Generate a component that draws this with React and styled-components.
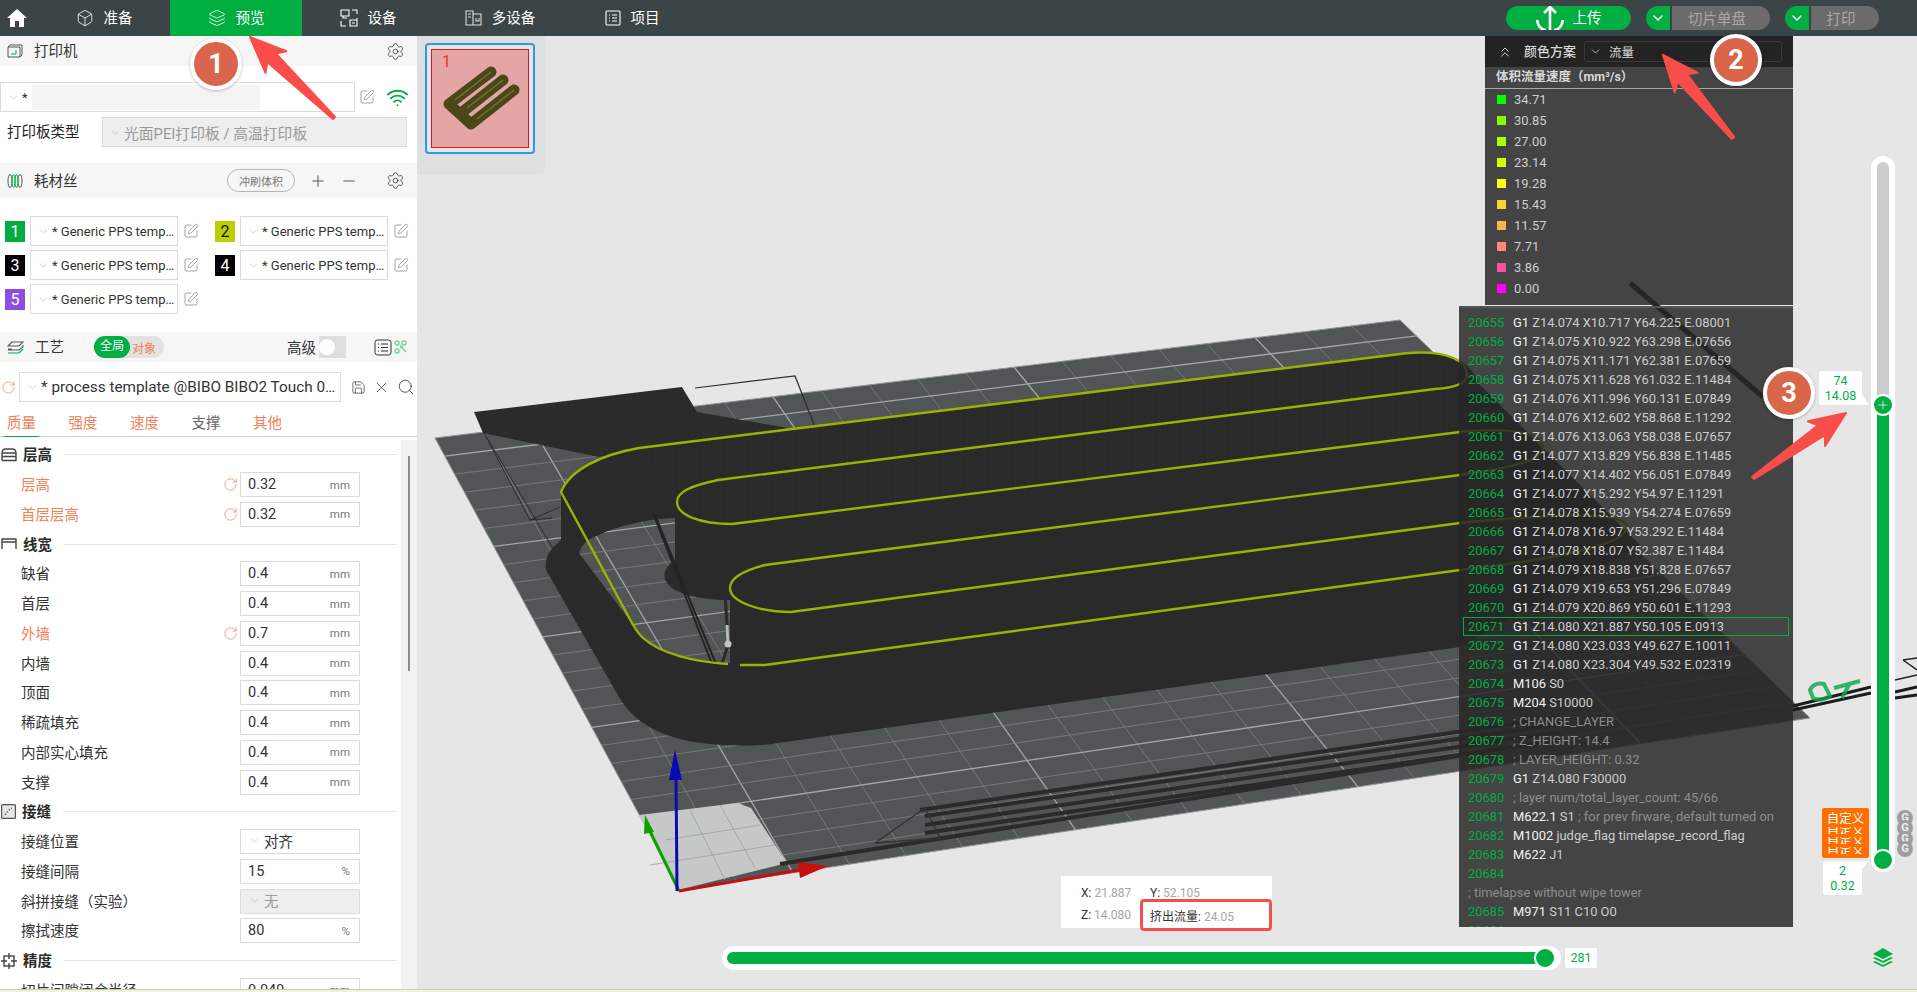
import React from 'react'
import styled, { createGlobalStyle } from 'styled-components'
import { Box, Layers, Settings, Wifi, SquarePen, Plus, Minus, Save, X, Search, RotateCw, ChevronDown, ChevronsUp } from 'lucide-react'

const font = `Roboto, "Noto Sans CJK SC", sans-serif`
const green = '#00ae42'
const orange = '#f4805a'

const GlobalStyle = createGlobalStyle`
  html, body { margin: 0; padding: 0; height: 100%; overflow: hidden; background: #e6e6e6; }
  * { box-sizing: border-box; }
  #root { height: 100%; }
`

const Page = styled.div`
  position: relative;
  width: 1917px;
  height: 992px;
  overflow: hidden;
  font-family: ${font};
  color: #262e30;
  display: flex;
  flex-direction: column;
`
const TopBar = styled.header`
  height: 36px;
  flex: none;
  background: #3b4446;
  display: flex;
  align-items: center;
`
const HomeButton = styled.div`
  width: 38px;
  height: 36px;
  display: flex;
  padding-left: 7px;
  align-items: center;
`
const NavTab = styled.div`
  width: 132px;
  height: 36px;
  display: flex;
  align-items: center;
  justify-content: center;
  gap: 10px;
  font-size: 14.5px;
  color: #fff;
  background: ${p => (p.$active ? green : 'transparent')};
`
const NavText = styled.span`
  margin-top: -3px;
`
const TopActions = styled.div`
  margin-left: auto;
  padding-right: 38px;
  display: flex;
  gap: 15px;
`
const UploadButton = styled.div`
  width: 125px;
  height: 24px;
  background: ${green};
  border-radius: 12px;
  color: #fff;
  font-size: 14.5px;
  display: flex;
  align-items: center;
  justify-content: center;
  gap: 7px;
  padding-right: 2px;
  overflow: hidden;
`
const SplitButton = styled.div`
  display: flex;
  gap: 2px;
  height: 24px;
`
const SplitChevron = styled.div`
  width: 24px;
  background: ${green};
  border-radius: 12px 0 0 12px;
  color: #fff;
  display: flex;
  align-items: center;
  justify-content: center;
`
const SplitLabel = styled.div`
  width: ${p => p.$w}px;
  background: #6b6b6b;
  border-radius: 0 12px 12px 0;
  color: #a8a8a8;
  font-size: 14.5px;
  display: flex;
  align-items: center;
  justify-content: center;
  padding: 0 8px 2px 0;
`
const Main = styled.div`
  flex: 1;
  display: flex;
  min-height: 0;
`
const Sidebar = styled.aside`
  width: 417px;
  flex: none;
  background: #fff;
  overflow: hidden;
  display: flex;
  flex-direction: column;
`
const SectionHeader = styled.div`
  height: ${p => p.$h || 30}px;
  flex: none;
  margin-top: ${p => p.$mt || 0}px;
  background: #f6f6f6;
  display: flex;
  align-items: center;
  padding: 0 ${p => p.$pr || 12}px 0 7px;
  font-size: 14.5px;
`
const HeaderTitle = styled.span`
  margin: -3px 0 0 11px;
  color: #333;
`
const HeaderRight = styled.div`
  margin-left: auto;
  display: flex;
  align-items: center;
`
const Pill = styled.div`
  width: 68px;
  height: 23px;
  border: 1px solid #b5b5b5;
  border-radius: 12px;
  font-size: 11px;
  color: #777;
  display: flex;
  align-items: center;
  justify-content: center;
  margin-right: 14px;
`
const PrinterRow = styled.div`
  display: flex;
  align-items: center;
  margin-top: 16px;
  height: 30px;
  gap: 4px;
`
const PlateRow = styled.div`
  display: flex;
  align-items: center;
  margin-top: 5px;
  height: 30px;
  padding-left: 7px;
  font-size: 14.5px;
`
const PlateLabel = styled.span`
  width: 95px;
  margin-top: -3px;
  color: #222;
`
const Select = styled.div`
  width: ${p => p.$w}px;
  height: ${p => p.$h || 30}px;
  flex: none;
  border: 1px solid #dbdbdb;
  background: ${p => (p.$disabled ? '#eeeeee' : '#fff')};
  color: ${p => (p.$disabled ? '#999' : '#333')};
  display: flex;
  align-items: center;
  padding-left: 6px;
  gap: 2px;
  font-size: ${p => p.$fs || 13}px;
  overflow: hidden;
  white-space: nowrap;
`
const SelectText = styled.span`
  min-width: 0;
`
const Redacted = styled.div`
  width: 228px;
  height: 25px;
  background: #f4f4f4;
  margin-left: 2px;
`
const FilamentGrid = styled.div`
  margin-top: 18px;
  padding-left: 5px;
  display: grid;
  grid-template-columns: 210px 210px;
  row-gap: 4px;
`
const FilamentRow = styled.div`
  display: flex;
  align-items: center;
  height: 30px;
`
const Swatch = styled.div`
  width: 20px;
  height: 21px;
  background: ${p => p.$c};
  color: ${p => p.$t || '#fff'};
  font-size: 16px;
  line-height: 21px;
  text-align: center;
  margin-right: 5px;
  flex: none;
`
const Toggle = styled.div`
  width: 70px;
  height: 22px;
  margin-left: 30px;
  border-radius: 11px;
  background: #e2e2e2;
  display: flex;
  align-items: center;
  font-size: 12px;
  color: ${orange};
`
const ToggleOn = styled.div`
  width: 36px;
  height: 22px;
  border-radius: 11px;
  background: ${green};
  color: #fff;
  text-align: center;
  line-height: 21px;
  margin-right: 2px;
`
const AdvancedLabel = styled.span`
  font-size: 14.5px;
  color: #333;
  margin-top: -2px;
`
const Switch = styled.div`
  width: 27px;
  height: 22px;
  background: #dedede;
  margin: 0 28px 0 3px;
  display: flex;
  align-items: center;
`
const SwitchKnob = styled.div`
  width: 16px;
  height: 16px;
  border-radius: 50%;
  background: #fff;
`
const PresetRow = styled.div`
  display: flex;
  align-items: center;
  margin-top: 10px;
  padding-left: 1px;
  height: 30px;
`
const PresetIcons = styled.div`
  display: flex;
  align-items: center;
  gap: 7px;
  margin-left: 10px;
`
const Tabs = styled.div`
  height: 35px;
  flex: none;
  border-bottom: 1px solid #cfcfcf;
  display: flex;
  padding: 13px 0 0 7px;
  gap: 32.5px;
  font-size: 14.5px;
`
const TabLabel = styled.div`
  color: ${p => p.$c};
  position: relative;
  height: 22px;
  line-height: 17px;
`
const TabMark = styled.div`
  position: absolute;
  left: -3px;
  right: -3px;
  bottom: 0;
  height: 1px;
  background: ${green};
`
const ParamsArea = styled.div`
  flex: 1;
  display: flex;
  min-height: 0;
  padding-top: 3px;
  overflow: hidden;
`
const ParamList = styled.div`
  width: 401px;
  flex: none;
`
const ScrollTrack = styled.div`
  width: 16px;
  flex: none;
  background: #f2f2f2;
  padding: 16px 0 0 7px;
`
const ScrollThumb = styled.div`
  width: 2px;
  height: 215px;
  background: #8a8a8a;
`
const GroupRow = styled.div`
  height: 29.75px;
  display: flex;
  align-items: center;
  padding-left: 1px;
  gap: 6px;
  font-size: 14.5px;
  font-weight: 700;
  color: #2a2a2a;
`
const GroupText = styled.span`
  margin-top: -2px;
`
const GroupLine = styled.div`
  flex: 1;
  height: 1px;
  background: #e6e6e6;
  margin: 0 4px 0 6px;
`
const ParamRow = styled.div`
  height: 29.75px;
  width: 360px;
  padding-left: 21px;
  display: grid;
  grid-template-columns: 1fr 17px 120px;
  align-items: center;
  font-size: 14.5px;
  color: ${p => (p.$changed ? orange : '#333')};
`
const ParamLabel = styled.span`
  margin-top: -2px;
`
const ResetSlot = styled.span`
  display: flex;
`
const ParamInput = styled.div`
  height: 25px;
  border: 1px solid #dbdbdb;
  background: ${p => (p.$disabled ? '#eeeeee' : '#fff')};
  color: ${p => (p.$disabled ? '#999' : '#333')};
  display: flex;
  align-items: center;
  justify-content: space-between;
  padding: 0 9px 0 7px;
  font-size: 14.5px;
`
const Unit = styled.span`
  font-size: 11.5px;
  color: #777;
`
const DropValue = styled.div`
  display: flex;
  align-items: center;
  gap: 3px;
  margin-top: -2px;
`
const Canvas = styled.main`
  flex: 1;
  position: relative;
  background: #e6e6e6;
  overflow: hidden;
`
const Scene = styled.svg`
  position: absolute;
  left: 0;
  top: 0;
  width: 1500px;
  height: 956px;
`
const ThumbPanel = styled.div`
  position: absolute;
  left: 0;
  top: 0;
  width: 128px;
  height: 138px;
  background: #dfdfdf;
  border-radius: 0 0 5px 0;
  padding: 7px 8px;
`
const ThumbCard = styled.div`
  width: 110px;
  height: 111px;
  border: 2px solid #2b98ea;
  border-radius: 4px;
  padding: 4px;
  background: #e6e6e6;
`
const ThumbInner = styled.div`
  position: relative;
  width: 100%;
  height: 100%;
  border: 1px solid #cf1c1c;
  background: #e5a5a5;
  color: #e33;
  font-size: 16px;
  line-height: 16px;
  padding: 4px 0 0 10px;
`
const ThumbShape = styled.svg`
  position: absolute;
  left: -7px;
  top: -7px;
  width: 110px;
  height: 111px;
`
const Legend = styled.section`
  position: absolute;
  left: 1068px;
  top: 0;
  width: 308px;
  height: 269px;
  background: rgba(39, 39, 39, 0.85);
  color: #cfcfcf;
`
const LegendHeader = styled.div`
  height: 31px;
  background: #232323;
  display: flex;
  align-items: center;
  padding-left: 12px;
  font-size: 13px;
  font-weight: 500;
  color: #d8d8d8;
`
const LegendHeading = styled.span`
  margin: -2px 8px 0 11px;
`
const LegendSelect = styled.div`
  width: 198px;
  height: 21px;
  border: 1px solid #3a3a3a;
  border-radius: 3px;
  display: flex;
  align-items: center;
  padding-left: 4px;
  gap: 7px;
  font-size: 12.5px;
  font-weight: 400;
`
const LegendTitle = styled.div`
  height: 22px;
  border-bottom: 1px solid #a8a8a8;
  padding-left: 11px;
  font-size: 12.5px;
  font-weight: 700;
  color: #d8d8d8;
  line-height: 19px;
`
const LegendList = styled.div`
  padding: 0 0 0 12px;
`
const LegendRow = styled.div`
  height: 21px;
  display: flex;
  align-items: center;
  gap: 8px;
  font-size: 12.9px;
`
const LegendDot = styled.div`
  width: 9px;
  height: 9px;
  background: ${p => p.$c};
`
const Gcode = styled.section`
  position: absolute;
  left: 1042px;
  top: 270px;
  width: 334px;
  height: 621px;
  background: rgba(39, 39, 39, 0.85);
  border-top: 2px solid #55555c;
  padding-top: 5px;
  overflow: hidden;
  font-size: 12.9px;
  white-space: nowrap;
`
const GcodeRow = styled.div`
  height: 19px;
  margin: 0 4px;
  padding-left: 4px;
  display: flex;
  align-items: center;
  border: ${p => (p.$active ? `1px solid ${green}` : '1px solid transparent')};
`
const LineNo = styled.span`
  width: 45px;
  flex: none;
  color: ${green};
`
const GcodeLine = styled.span`
  white-space: pre;
`
const Cmd = styled.span`
  color: #f2f2f2;
`
const Args = styled.span`
  color: #cccccc;
`
const Comment = styled.span`
  color: #8e8e8e;
`
const VSlider = styled.div`
  position: absolute;
  left: 1454px;
  top: 120px;
  width: 24px;
  height: 716px;
  background: #fff;
  border-radius: 12px;
  padding: 6px;
  display: flex;
  flex-direction: column;
`
const RailGrey = styled.div`
  flex: 1;
  background: #cccccc;
  border-radius: 6px 6px 0 0;
`
const RailGreen = styled.div`
  height: 460px;
  background: ${green};
`
const Handle = styled.div`
  position: absolute;
  left: ${p => p.$x}px;
  top: ${p => p.$y}px;
  width: 22px;
  height: 22px;
  border-radius: 50%;
  background: ${green};
  border: 2px solid #fff;
  display: flex;
  align-items: center;
  justify-content: center;
  color: #fff;
`
const SliderTip = styled.div`
  position: absolute;
  left: ${p => p.$x}px;
  top: ${p => p.$y}px;
  width: ${p => p.$w}px;
  height: 34px;
  background: #fff;
  color: ${green};
  font-size: 12.5px;
  line-height: 15px;
  text-align: center;
  padding-top: 2px;
  border-radius: 2px;
`
const TipTail = styled.svg`
  position: absolute;
  left: ${p => p.$x}px;
  top: ${p => p.$y}px;
`
const CustomTag = styled.div`
  position: absolute;
  left: 1405px;
  top: 772px;
  width: 47px;
  height: 50px;
  background: #ff6f00;
  border-radius: 2px;
  color: #fff;
  font-size: 12.5px;
  text-align: center;
  overflow: hidden;
  padding-top: 3px;
`
const CustomFirst = styled.div`
  height: 15px;
  line-height: 15px;
  margin-bottom: 1px;
`
const CustomClip = styled.div`
  height: 7px;
  line-height: 7px;
  margin-bottom: 3px;
  overflow: hidden;
`
const GMarks = styled.div`
  position: absolute;
  left: 1480px;
  top: 774px;
  display: flex;
  flex-direction: column;
`
const GMark = styled.div`
  width: 16px;
  height: 16px;
  margin-bottom: -5.6px;
  border-radius: 50%;
  background: #9e9e9e;
  color: #eee;
  font-size: 11px;
  font-weight: 700;
  line-height: 16px;
  text-align: center;
`
const HSlider = styled.div`
  position: absolute;
  left: 305px;
  top: 910px;
  width: 839px;
  height: 24px;
  background: #fff;
  border-radius: 12px;
  padding: 6px 5px;
`
const RailH = styled.div`
  width: 816px;
  height: 12px;
  border-radius: 6px 0 0 6px;
  background: ${green};
`
const HValue = styled.div`
  position: absolute;
  left: 1148px;
  top: 912px;
  width: 32px;
  height: 20px;
  background: #fff;
  border-radius: 2px;
  color: ${green};
  font-size: 12.5px;
  line-height: 20px;
  text-align: center;
`
const StackButton = styled.svg`
  position: absolute;
  left: 1456px;
  top: 911px;
`
const InfoBox = styled.div`
  position: absolute;
  left: 644px;
  top: 840px;
  width: 211px;
  height: 52px;
  background: #fff;
  display: grid;
  grid-template-columns: 69px 1fr;
  grid-template-rows: 25px 20px;
  padding: 4px 0 0 20px;
  font-size: 12px;
  color: #333;
  align-items: center;
`
const InfoVal = styled.span`
  color: #a6a6a6;
`
const RedFrame = styled.div`
  position: absolute;
  left: 723px;
  top: 863px;
  width: 132px;
  height: 32px;
  border: 3px solid #f44e4e;
  border-radius: 4px;
`
const StatusStrip = styled.div`
  position: absolute;
  left: 0;
  bottom: 0;
  width: 100%;
  height: 3px;
  background: #eef5d8;
  border-top: 1px solid #c9cfc0;
`
const ArrowLayer = styled.svg`
  position: absolute;
  left: 0;
  top: 0;
  width: 1917px;
  height: 992px;
  pointer-events: none;
`
const CallOut = styled.div`
  position: absolute;
  left: ${p => p.$x - 26}px;
  top: ${p => p.$y - 26}px;
  width: 52px;
  height: 52px;
  border-radius: 50%;
  background: #d9654a;
  border: 4px solid #fff;
  box-shadow: 0 1px 3px rgba(0, 0, 0, 0.25);
  color: #fff;
  font-size: 27px;
  font-weight: 700;
  line-height: 44px;
  text-align: center;
`

const Edit = p => <SquarePen size={16} strokeWidth={1} color="#777" {...p} />
const Gear = () => <Settings size={19} strokeWidth={1.1} color="#444" />
const Chev = ({ c = '#aaa' }) => <ChevronDown size={13} strokeWidth={1} color={c} style={{ flex: 'none' }} />
const Reset = () => <RotateCw size={15} strokeWidth={1.2} color={orange} />

const PLATE = [[435, 438], [1400, 320], [1810, 718], [680, 890]]
const lerp = (a, b, t) => [a[0] + (b[0] - a[0]) * t, a[1] + (b[1] - a[1]) * t]

// plate grid, plain bilinear, the perspective is small enough
function gridLines() {
  const out = []
  const [tl, tr, br, bl] = PLATE
  for (let i = 1; i < 20; i++) {
    const a = lerp(tl, tr, i / 20)
    const b = lerp(bl, br, i / 20)
    out.push(<line key={'u' + i} x1={a[0]} y1={a[1]} x2={b[0]} y2={b[1]} stroke={i % 5 === 2 ? '#a3a6a6' : '#7d8282'} strokeWidth={i % 5 === 2 ? 1.3 : 0.8} />)
  }
  for (let i = 1; i < 25; i++) {
    const a = lerp(tl, bl, i / 25)
    const b = lerp(tr, br, i / 25)
    out.push(<line key={'v' + i} x1={a[0]} y1={a[1]} x2={b[0]} y2={b[1]} stroke={i % 5 === 1 ? '#a3a6a6' : '#7d8282'} strokeWidth={i % 5 === 1 ? 1.3 : 0.8} />)
  }
  return out
}

const SILHOUETTE = 'M561 492 C570 470 600 455 639 448 L1408 353 C1450 350 1470 360 1480 385 L1640 545 L1460 647 L778 743 C760 746 745 746 732 745 C690 745 640 735 619 697 L546 570 C544 555 552 548 561 540 Z'
const GAP = 'M579 553 C582 545 586 541 592 538 C620 524 650 519 675 518 L675 560 C660 570 662 582 675 590 C692 598 712 600 730 600 L730 663 C710 662 697 660 685 657 C665 651 652 646 642 637 Z'
const YELLOW = [
  'M1435 389 C1450 388 1467 385 1467 375 C1467 362 1450 350 1408 353 L639 448 C600 455 570 470 561 492 L632 623 C636 630 638 633 642 637 C660 654 695 662 728 664',
  'M740 665 L765 665 L1460 570 C1550 560 1627 545 1627 527 C1627 510 1540 515 1460 523 L791 612 C760 612 730 602 730 588 C730 578 742 571 765 565 L1460 475 C1520 467 1545 458 1543 447 C1540 430 1500 428 1460 432 L732 524 C700 524 677 515 677 502 C677 492 690 486 718 480 L1435 389',
]

function ArrowShape({ from, to }) {
  const dx = to[0] - from[0]
  const dy = to[1] - from[1]
  const len = Math.hypot(dx, dy)
  const d = [dx / len, dy / len]
  const n = [-d[1], d[0]]
  const at = (along, side) => `${from[0] + d[0] * along + n[0] * side},${from[1] + d[1] * along + n[1] * side}`
  const pts = [at(0, -1.5), at(len - 30, -6), at(len - 36, -15), at(len, 0), at(len - 36, 15), at(len - 30, 6), at(0, 1.5)]
  return <polygon points={pts.join(' ')} fill="#f94d4a" strokeLinejoin="round" stroke="#f94d4a" strokeWidth="2" />
}

function SceneArt() {
  return (
    <Scene viewBox="417 36 1500 956">
      <defs>
        <clipPath id="gap"><path d={GAP} /></clipPath>
        <pattern id="dots" width="6" height="4" patternUnits="userSpaceOnUse">
          <circle cx="1.5" cy="1.5" r="0.3" fill="#4c4c4c" />
        </pattern>
      </defs>
      <line x1="1630" y1="283" x2="1763" y2="397" stroke="#222" strokeWidth="5" />
      <polygon points={PLATE.map(p => p.join(',')).join(' ')} fill="#515555" stroke="#8f9393" strokeWidth="1" />
      <g>{gridLines()}</g>
      <polygon points="639,815 738,803 751,808 787,863 678,890" fill="#c6c8c8" />
      <path d="M665 840 L760 825 M650 865 L775 845 M690 810 L725 880 M720 805 L755 868" stroke="#9da0a0" strokeWidth="0.8" />
      <polyline points="695,388 795,376 815,427" fill="none" stroke="#2c2c2c" strokeWidth="1.2" />
      <polygon points="474,412 682,387 697,412 788,428 599,457 483,433" fill="#2b2b2b" />
      <polygon points="474,412 682,387 697,412 788,428 599,457 483,433" fill="url(#dots)" />
      <path d="M484 433 L560 560 M484 433 L530 520 L552 518 M530 520 L560 507" stroke="#2c2c2c" strokeWidth="1" fill="none" />
      <path d={SILHOUETTE} fill="#2a2a2a" />
      <path d={GAP} fill="#515555" />
      <g clipPath="url(#gap)">{gridLines()}</g>
      <path d="M653 513 L712 664 M655 515 L716 664" stroke="#232323" strokeWidth="2" />
      <path d="M725 590 L728 645 L722 664" stroke="#2a2a2a" strokeWidth="3" fill="none" />
      <path d="M727 625 L728 645" stroke="#b8b8b8" strokeWidth="3" />
      <circle cx="728" cy="644" r="3.5" fill="#c4c4c4" />
      <path d="M639 448 L1408 353 L1460 365 L1460 432 L732 524 L677 502 Z" fill="url(#dots)" />
      {YELLOW.map(d => <path key={d} d={d} fill="none" stroke="#9db200" strokeWidth="2.4" />)}

      <path d="M780 864 L1459 756 M920 810 L1560 717 M925 816 L1560 724 M925 825 L1560 732 M925 833 L1560 740" stroke="#2a2a2a" strokeWidth="4" />
      <path d="M875 843 L925 808 L940 838 L875 843" fill="none" stroke="#333" strokeWidth="1.5" />
      <path d="M1793 710 L1871 693 M1793 706 L1871 687 M1895 698 L1917 695 M1895 692 L1917 687" stroke="#1c1c1c" strokeWidth="3" />
      <path d="M1903 660 L1917 670 M1903 660 L1917 658 M1895 680 L1917 675" fill="none" stroke="#222" strokeWidth="1.5" />
      <path d="M1810 690 Q1814 682 1824 684 L1830 696 Q1820 702 1813 698 Z M1834 688 L1860 681 M1850 683 L1842 698" fill="none" stroke="#0fa44a" strokeWidth="4" opacity="0.8" />

      <line x1="679" y1="891" x2="647" y2="825" stroke="#0fa000" strokeWidth="3" />
      <polygon points="645,815 654,832 644,834" fill="#0fa000" />
      <line x1="679" y1="891" x2="800" y2="870" stroke="#c80f0f" strokeWidth="3" />
      <polygon points="828,866 798,862 800,878" fill="#c80f0f" />
      <line x1="677" y1="891" x2="676" y2="775" stroke="#0a0ab0" strokeWidth="3" />
      <polygon points="675,750 669,780 682,780" fill="#0a0ab0" />
    </Scene>
  )
}

const LEGEND = [['#00ff00', '34.71'], ['#80ff00', '30.85'], ['#aaff00', '27.00'], ['#d4ff00', '23.14'], ['#ffff00', '19.28'], ['#ffd42a', '15.43'], ['#ffb348', '11.57'], ['#ff8a70', '7.71'], ['#ff50a0', '3.86'], ['#ff00ff', '0.00']]

const GCODE = [
  ['20655', 'G1 Z14.074 X10.717 Y64.225 E.08001'], ['20656', 'G1 Z14.075 X10.922 Y63.298 E.07656'],
  ['20657', 'G1 Z14.075 X11.171 Y62.381 E.07659'], ['20658', 'G1 Z14.075 X11.628 Y61.032 E.11484'],
  ['20659', 'G1 Z14.076 X11.996 Y60.131 E.07849'], ['20660', 'G1 Z14.076 X12.602 Y58.868 E.11292'],
  ['20661', 'G1 Z14.076 X13.063 Y58.038 E.07657'], ['20662', 'G1 Z14.077 X13.829 Y56.838 E.11485'],
  ['20663', 'G1 Z14.077 X14.402 Y56.051 E.07849'], ['20664', 'G1 Z14.077 X15.292 Y54.97 E.11291'],
  ['20665', 'G1 Z14.078 X15.939 Y54.274 E.07659'], ['20666', 'G1 Z14.078 X16.97 Y53.292 E.11484'],
  ['20667', 'G1 Z14.078 X18.07 Y52.387 E.11484'], ['20668', 'G1 Z14.079 X18.838 Y51.828 E.07657'],
  ['20669', 'G1 Z14.079 X19.653 Y51.296 E.07849'], ['20670', 'G1 Z14.079 X20.869 Y50.601 E.11293'],
  ['20671', 'G1 Z14.080 X21.887 Y50.105 E.0913'], ['20672', 'G1 Z14.080 X23.033 Y49.627 E.10011'],
  ['20673', 'G1 Z14.080 X23.304 Y49.532 E.02319'], ['20674', 'M106 S0'], ['20675', 'M204 S10000'],
  ['20676', '; CHANGE_LAYER'], ['20677', '; Z_HEIGHT: 14.4'], ['20678', '; LAYER_HEIGHT: 0.32'],
  ['20679', 'G1 Z14.080 F30000'], ['20680', '; layer num/total_layer_count: 45/66'],
  ['20681', 'M622.1 S1 ; for prev firware, default turned on'], ['20682', 'M1002 judge_flag timelapse_record_flag'],
  ['20683', 'M622 J1'], ['20684', ''], ['', '; timelapse without wipe tower'], ['20685', 'M971 S11 C10 O0'], ['20686', ''],
]

function GcodeText({ text }) {
  const semi = text.indexOf(';')
  const code = semi >= 0 ? text.slice(0, semi) : text
  const comment = semi >= 0 ? text.slice(semi) : ''
  const space = code.indexOf(' ')
  const cmd = space >= 0 ? code.slice(0, space) : code
  const args = space >= 0 ? code.slice(space) : ''
  return (
    <GcodeLine>
      <Cmd>{cmd}</Cmd><Args>{args}</Args><Comment>{comment}</Comment>
    </GcodeLine>
  )
}

const GroupIcon = ({ kind }) => {
  if (kind === 'height') return <svg width="16" height="14" viewBox="0 0 16 14" fill="none" stroke="#444" strokeWidth="1.4"><path d="M1 5 Q1 1 5 1 H11 Q15 1 15 5 M1 5H15 M1 8.5H15 M1 12.5H15 V5 M1 12.5 V5" /></svg>
  if (kind === 'width') return <svg width="16" height="12" viewBox="0 0 16 12" fill="none" stroke="#444" strokeWidth="1.4"><path d="M1 1H15 V4H1Z M1 4V11 M15 4V11" /></svg>
  if (kind === 'seam') return <svg width="15" height="15" viewBox="0 0 15 15" fill="#e6e6e6" stroke="#555" strokeWidth="1.2"><rect x="0.6" y="0.6" width="13.8" height="13.8" rx="1" /><path d="M4 11 Q7 6 11 4" strokeDasharray="1.5 1.5" fill="none" /></svg>
  return <svg width="16" height="16" viewBox="0 0 16 16" fill="none" stroke="#444" strokeWidth="1.4"><rect x="3" y="3" width="10" height="10" /><path d="M8 0V6 M8 10V16 M0 8H6 M10 8H16" /></svg>
}

const PARAMS = [
  { group: '层高', kind: 'height' },
  { label: '层高', value: '0.32', unit: 'mm', changed: true },
  { label: '首层层高', value: '0.32', unit: 'mm', changed: true },
  { group: '线宽', kind: 'width' },
  { label: '缺省', value: '0.4', unit: 'mm' },
  { label: '首层', value: '0.4', unit: 'mm' },
  { label: '外墙', value: '0.7', unit: 'mm', changed: true },
  { label: '内墙', value: '0.4', unit: 'mm' },
  { label: '顶面', value: '0.4', unit: 'mm' },
  { label: '稀疏填充', value: '0.4', unit: 'mm' },
  { label: '内部实心填充', value: '0.4', unit: 'mm' },
  { label: '支撑', value: '0.4', unit: 'mm' },
  { group: '接缝', kind: 'seam' },
  { label: '接缝位置', drop: '对齐' },
  { label: '接缝间隔', value: '15', unit: '%' },
  { label: '斜拼接缝（实验）', drop: '无', disabled: true },
  { label: '擦拭速度', value: '80', unit: '%' },
  { group: '精度', kind: 'precision' },
  { label: '切片间隙闭合半径', value: '0.049', unit: 'mm' },
]

const FILAMENTS = [['1', '#00ae42'], ['2', '#bccf00', '#111'], ['3', '#000'], ['4', '#000'], ['5', '#8a4fe0']]

export default function App() {
  return (
    <Page>
      <GlobalStyle />
      <TopBar>
        <HomeButton>
          <svg width="20" height="20" viewBox="0 0 20 20" fill="#fff"><path d="M10 1 L20 10 H17 V19 H12 V13 H8 V19 H3 V10 H0 Z" /></svg>
        </HomeButton>
        <NavTab><Box size={18} strokeWidth={1.1} /><NavText>准备</NavText></NavTab>
        <NavTab $active><Layers size={18} strokeWidth={1.1} /><NavText>预览</NavText></NavTab>
        <NavTab>
          <svg width="18" height="18" viewBox="0 0 18 18" fill="none" stroke="#fff" strokeWidth="1.1"><path d="M1 1H9V7H1Z M3 7V9 H7 M12 1H17V5 M1 12V17H6 M17 9V17H10V11H17 M12 14H15" /></svg>
          <NavText>设备</NavText>
        </NavTab>
        <NavTab>
          <svg width="17" height="16" viewBox="0 0 17 16" fill="none" stroke="#ddd" strokeWidth="1.1"><path d="M1 1H8V15H1Z M8 4H16V15H8 M3 4H6 M3 7H6 M11 8V11H14V8" /></svg>
          <NavText>多设备</NavText>
        </NavTab>
        <NavTab>
          <svg width="16" height="16" viewBox="0 0 16 16" fill="none" stroke="#fff" strokeWidth="1.1"><rect x="1" y="1" width="14" height="14" rx="1" /><path d="M4 5H5 M7 5H12 M4 8H5 M7 8H12 M4 11H5 M7 11H12" /></svg>
          <NavText>项目</NavText>
        </NavTab>
        <TopActions>
          <UploadButton>
            <svg width="32" height="24" viewBox="0 0 32 24" fill="none" stroke="#fff" strokeWidth="2.6"><path d="M16 24V2 M10 7L16 1L22 7 M3 14 Q5 24 12 24 M29 14 Q27 24 20 24" /></svg>
            <NavText>上传</NavText>
          </UploadButton>
          <SplitButton>
            <SplitChevron><ChevronDown size={16} strokeWidth={2.2} /></SplitChevron>
            <SplitLabel $w={98}>切片单盘</SplitLabel>
          </SplitButton>
          <SplitButton>
            <SplitChevron><ChevronDown size={16} strokeWidth={2.2} /></SplitChevron>
            <SplitLabel $w={68}>打印</SplitLabel>
          </SplitButton>
        </TopActions>
      </TopBar>

      <Main>
        <Sidebar>
          <SectionHeader>
            <svg width="16" height="14" viewBox="0 0 16 14" fill="none" stroke="#555" strokeWidth="1"><path d="M1 3H13V13H1Z M1 3L3 1H15V11L13 13" /><path d="M4 10H9 L9 6" stroke={green} /></svg>
            <HeaderTitle>打印机</HeaderTitle>
            <HeaderRight><Gear /></HeaderRight>
          </SectionHeader>
          <PrinterRow>
            <Select $w={355}>
              <Chev />*<Redacted />
            </Select>
            <Edit />
            <Wifi size={23} strokeWidth={2} color={green} style={{ marginLeft: 7 }} />
          </PrinterRow>
          <PlateRow>
            <PlateLabel>打印板类型</PlateLabel>
            <Select $w={305} $disabled $fs={14.8}>
              <Chev />光面PEI打印板 / 高温打印板
            </Select>
          </PlateRow>

          <SectionHeader $h={35} $mt={16}>
            <svg width="16" height="16" viewBox="0 0 16 16" fill="none" stroke="#555" strokeWidth="1"><ellipse cx="3" cy="8" rx="2" ry="6.5" /><ellipse cx="13" cy="8" rx="2" ry="6.5" /><ellipse cx="6.5" cy="8" rx="1.5" ry="6.5" stroke={green} /><ellipse cx="9.5" cy="8" rx="1.5" ry="6.5" stroke={green} /></svg>
            <HeaderTitle>耗材丝</HeaderTitle>
            <HeaderRight>
              <Pill>冲刷体积</Pill>
              <Plus size={18} strokeWidth={1.3} color="#555" />
              <Minus size={18} strokeWidth={1.3} color="#555" style={{ marginLeft: 13, marginRight: 28 }} />
              <Gear />
            </HeaderRight>
          </SectionHeader>
          <FilamentGrid>
            {FILAMENTS.map(([n, c, t]) => (
              <FilamentRow key={n}>
                <Swatch $c={c} $t={t}>{n}</Swatch>
                <Select $w={148}>
                  <Chev />
                  <SelectText>* Generic PPS temp…</SelectText>
                </Select>
                <Edit style={{ marginLeft: 5 }} />
              </FilamentRow>
            ))}
          </FilamentGrid>

          <SectionHeader $mt={18} $pr={9}>
            <svg width="17" height="15" viewBox="0 0 17 15" fill="none" stroke="#555" strokeWidth="1.1"><path d="M1 6L5 2H16L12 6Z M1 9L5 9 M16 5V7L12 10H1" /><path d="M1 13H12L16 9" stroke={green} /></svg>
            <HeaderTitle>工艺</HeaderTitle>
            <Toggle><ToggleOn>全局</ToggleOn>对象</Toggle>
            <HeaderRight>
              <AdvancedLabel>高级</AdvancedLabel>
              <Switch><SwitchKnob /></Switch>
              <svg width="18" height="17" viewBox="0 0 18 17" fill="none" stroke="#333" strokeWidth="1"><rect x="1" y="1" width="16" height="15" rx="2.5" /><path d="M4 5H5 M7 5H14 M4 8.5H5 M7 8.5H14 M4 12H5 M7 12H14" /></svg>
              <svg width="14" height="14" viewBox="0 0 14 14" fill="none" stroke="#7fd19b" strokeWidth="1.4" style={{ marginLeft: 2 }}><circle cx="3" cy="3" r="2" /><circle cx="10" cy="3" r="2" /><circle cx="3" cy="11" r="2" /><path d="M6 5L12 12 M6 8L9 6" /></svg>
            </HeaderRight>
          </SectionHeader>
          <PresetRow>
            <Reset />
            <Select $w={322} $fs={15.3} style={{ marginLeft: 3 }}>
              <Chev />
              <SelectText>* process template @BIBO BIBO2 Touch 0…</SelectText>
            </Select>
            <PresetIcons>
              <Save size={15} strokeWidth={1} color="#222" />
              <X size={17} strokeWidth={1} color="#222" />
              <Search size={18} strokeWidth={1} color="#222" />
            </PresetIcons>
          </PresetRow>
          <Tabs>
            <TabLabel $c={orange}>质量<TabMark /></TabLabel>
            <TabLabel $c={orange}>强度</TabLabel>
            <TabLabel $c={orange}>速度</TabLabel>
            <TabLabel $c="#666">支撑</TabLabel>
            <TabLabel $c={orange}>其他</TabLabel>
          </Tabs>
          <ParamsArea>
            <ParamList>
              {PARAMS.map((p, i) => p.group ? (
                <GroupRow key={i}><GroupIcon kind={p.kind} /><GroupText>{p.group}</GroupText><GroupLine /></GroupRow>
              ) : (
                <ParamRow key={i} $changed={p.changed}>
                  <ParamLabel>{p.label}</ParamLabel>
                  <ResetSlot>{p.changed && <Reset />}</ResetSlot>
                  <ParamInput $disabled={p.disabled}>
                    {p.drop ? <DropValue><Chev />{p.drop}</DropValue> : <><span>{p.value}</span><Unit>{p.unit}</Unit></>}
                  </ParamInput>
                </ParamRow>
              ))}
            </ParamList>
            <ScrollTrack><ScrollThumb /></ScrollTrack>
          </ParamsArea>
        </Sidebar>

        <Canvas>
          <SceneArt />
          <ThumbPanel>
            <ThumbCard>
              <ThumbInner>
                1
                <ThumbShape viewBox="0 0 110 111">
                  <path d="M66 29 L24 61 M78 37 L36 70 M89 47 L46 81 M24 61 L46 81" stroke="#4a4818" strokeWidth="11" strokeLinecap="round" />
                  <path d="M66 29 L30 57 M78 37 L42 65 M89 47 L52 76" stroke="#75733a" strokeWidth="1.2" />
                </ThumbShape>
              </ThumbInner>
            </ThumbCard>
          </ThumbPanel>

          <Legend>
            <LegendHeader>
              <ChevronsUp size={16} strokeWidth={1.4} />
              <LegendHeading>颜色方案</LegendHeading>
              <LegendSelect><ChevronDown size={13} strokeWidth={1.4} />流量</LegendSelect>
            </LegendHeader>
            <LegendTitle>体积流量速度（mm³/s）</LegendTitle>
            <LegendList>
              {LEGEND.map(([c, v]) => (
                <LegendRow key={v}><LegendDot $c={c} />{v}</LegendRow>
              ))}
            </LegendList>
          </Legend>

          <Gcode>
            {GCODE.map(([n, t], i) => (
              <GcodeRow key={i} $active={n === '20671'}>
                {n && <LineNo>{n}</LineNo>}
                {t && (n ? <GcodeText text={t} /> : <Comment>{t}</Comment>)}
              </GcodeRow>
            ))}
          </Gcode>

          <VSlider>
            <RailGrey />
            <RailGreen />
          </VSlider>
          <Handle $x={1455} $y={358}><Plus size={14} strokeWidth={1.2} /></Handle>
          <Handle $x={1455} $y={813} />
          <SliderTip $x={1402} $y={335} $w={43}>74<br />14.08</SliderTip>
          <TipTail $x={1445} $y={359} width="7" height="10"><polygon points="0,0 0,10 7,10" fill="#fff" /></TipTail>
          <CustomTag>
            <CustomFirst>自定义</CustomFirst>
            <CustomClip>自定义</CustomClip>
            <CustomClip>自定义</CustomClip>
            <CustomClip>自定义</CustomClip>
          </CustomTag>
          <SliderTip $x={1406} $y={825} $w={39}>2<br />0.32</SliderTip>
          <TipTail $x={1445} $y={825} width="7" height="8"><polygon points="0,0 7,0 0,8" fill="#fff" /></TipTail>
          <GMarks>
            <GMark>G</GMark><GMark>G</GMark><GMark>G</GMark><GMark>G</GMark>
          </GMarks>

          <HSlider><RailH /></HSlider>
          <Handle $x={1117} $y={911} />
          <HValue>281</HValue>
          <StackButton width="20" height="20" viewBox="0 0 20 20" fill={green}>
            <path d="M10 1 L20 7 L10 12 L0 7 Z M2 10 L10 14 L18 10 L20 11 L10 16 L0 11 Z M2 14 L10 18 L18 14 L20 15 L10 20 L0 15 Z" />
          </StackButton>

          <InfoBox>
            <span>X: <InfoVal>21.887</InfoVal></span>
            <span>Y: <InfoVal>52.105</InfoVal></span>
            <span>Z: <InfoVal>14.080</InfoVal></span>
            <span>挤出流量: <InfoVal>24.05</InfoVal></span>
          </InfoBox>
          <RedFrame />
        </Canvas>
      </Main>
      <StatusStrip />

      <ArrowLayer viewBox="0 0 1917 992">
        <ArrowShape from={[334, 118]} to={[250, 37]} />
        <ArrowShape from={[1733, 138]} to={[1663, 55]} />
        <ArrowShape from={[1753, 478]} to={[1846, 413]} />
      </ArrowLayer>
      <CallOut $x={216} $y={64}>1</CallOut>
      <CallOut $x={1736} $y={60}>2</CallOut>
      <CallOut $x={1789} $y={393}>3</CallOut>
    </Page>
  )
}
